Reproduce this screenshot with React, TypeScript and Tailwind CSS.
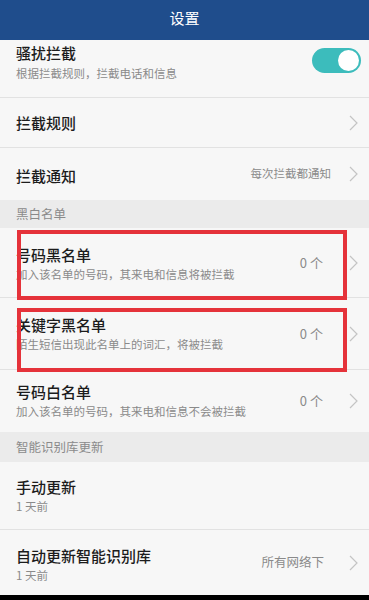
import React from "react";

const font = { fontFamily: '"Noto Sans CJK SC", "Noto Sans", sans-serif' };

function Chevron() {
  return (
    <svg width="9" height="16" viewBox="0 0 9 16" className="shrink-0">
      <path d="M1 1 L8 8 L1 15" fill="none" stroke="#c4c4c4" strokeWidth="1.2" />
    </svg>
  );
}

function Row({
  title,
  sub,
  right,
  rightCls = "",
  chevron = true,
  h,
  pt,
  border = true,
}: {
  title: string;
  sub?: string;
  right?: string;
  rightCls?: string;
  chevron?: boolean;
  h: string;
  pt?: string;
  border?: boolean;
}) {
  return (
    <div
      className={`flex items-center pl-4 pr-[11px] bg-[#f7f7f7] ${h} ${border ? "border-b border-[#e2e2e2]" : ""}`}
    >
      <div className={`flex-1 flex flex-col justify-center ${pt ?? ""}`}>
        <div className="text-[15px] leading-[20px] text-[#1c1c1c] font-medium">{title}</div>
        {sub && <div className="text-[11.5px] leading-[17px] text-[#8a8a8a] mt-[1px]">{sub}</div>}
      </div>
      {right && <div className={`text-[#8a8a8a] ${rightCls}`}>{right}</div>}
      {chevron && <Chevron />}
    </div>
  );
}

function Section({ title, h }: { title: string; h: string }) {
  return (
    <div className={`flex items-center pl-4 bg-[#ebebeb] text-[12.5px] text-[#8a8a8a] ${h}`}>{title}</div>
  );
}

export default function App() {
  return (
    <div className="w-[369px] h-[600px] overflow-hidden bg-[#f7f7f7] flex flex-col relative" style={font}>
      <div className="h-[40px] bg-[#1f4d8c] flex items-center justify-center text-white text-[15px] pb-[4px] shrink-0">
        设置
      </div>
      {/* 骚扰拦截 */}
      <div className="h-[58px] flex items-start pl-4 pr-[8px] bg-[#f7f7f7] border-b border-[#e2e2e2]">
        <div className="flex-1 pt-[3px]">
          <div className="text-[15px] leading-[20px] text-[#1c1c1c] font-medium">骚扰拦截</div>
          <div className="text-[11.5px] leading-[17px] text-[#8a8a8a] mt-[2px]">根据拦截规则，拦截电话和信息</div>
        </div>
        <div className="mt-[8px] w-[49px] h-[25px] rounded-full bg-[#3cbcbc] relative">
          <div className="absolute right-[2px] top-[2px] w-[21px] h-[21px] rounded-full bg-white"></div>
        </div>
      </div>
      <Row title="拦截规则" h="h-[50px]" />
      <Row title="拦截通知" right="每次拦截都通知" rightCls="text-[11.5px] mr-[18px]" h="h-[52px]" pt="pt-[3px]" border={false} />
      <Section title="黑白名单" h="h-[28px]" />
      <Row title="号码黑名单" sub="加入该名单的号码，其来电和信息将被拦截" right="0 个" rightCls="text-[13px] mr-[26px]" h="h-[70px]" pt="pt-[2px]" />
      <Row title="关键字黑名单" sub="陌生短信出现此名单上的词汇，将被拦截" right="0 个" rightCls="text-[13px] mr-[26px]" h="h-[72px]" pt="pt-[0px]" />
      <Row title="号码白名单" sub="加入该名单的号码，其来电和信息不会被拦截" right="0 个" rightCls="text-[13px] mr-[26px]" h="h-[62px]" pt="pt-[0px]" border={false} />
      <Section title="智能识别库更新" h="h-[30px]" />
      <Row title="手动更新" sub="1 天前" chevron={false} h="h-[68px]" pt="pt-[0px]" />
      <Row title="自动更新智能识别库" sub="1 天前" right="所有网络下" rightCls="text-[12.5px] mr-[25px]" h="h-[65px]" pt="pt-[4px]" border={false} />
      <div className="flex-1 bg-black"></div>

      {/* red highlight boxes */}
      <div className="absolute left-[17px] top-[230px] w-[330px] h-[70px] border-[4px] border-[#e5323a]"></div>
      <div className="absolute left-[17px] top-[308px] w-[330px] h-[64px] border-[4px] border-[#e5323a]"></div>
    </div>
  );
}
